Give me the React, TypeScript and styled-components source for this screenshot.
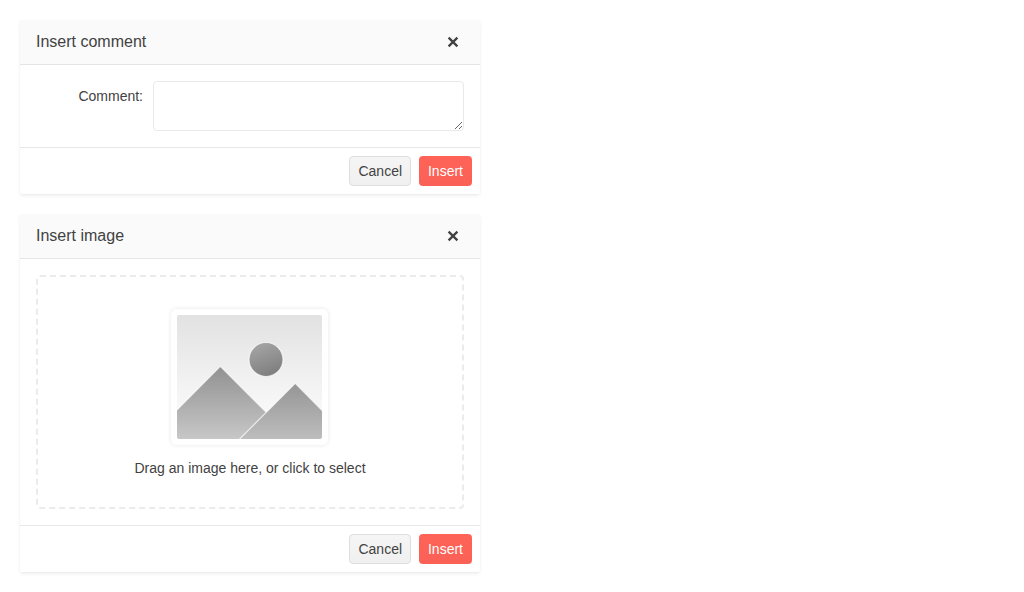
import React from "react";
import styled, { createGlobalStyle } from "styled-components";

const Global = createGlobalStyle`
  body {
    margin: 0;
    background: #fff;
    color: #424242;
    font: 14px/20px "Liberation Sans", Arial, sans-serif;
  }
  *, *::before, *::after { box-sizing: border-box; }
`;

const Page = styled.main`
  display: flex;
  flex-direction: column;
  gap: 20px;
  width: 500px;
  padding: 20px;
`;

const Window = styled.section`
  display: flex;
  flex-direction: column;
  background: #fff;
  border-radius: 2px;
  box-shadow: 0 1px 2px rgba(0, 0, 0, 0.03), 0 2px 4px rgba(0, 0, 0, 0.06);
`;

const TitleBar = styled.header`
  display: flex;
  align-items: center;
  justify-content: space-between;
  height: 45px;
  padding: 0 16px;
  background: #fafafa;
  border-bottom: 1px solid #e5e5e5;
`;

const Title = styled.h2`
  margin: 0;
  font-size: 16px;
  font-weight: 400;
  line-height: 20px;
`;

const CloseButton = styled.button`
  display: flex;
  align-items: center;
  justify-content: center;
  width: 22px;
  height: 22px;
  padding: 0;
  border: 0;
  background: transparent;
  color: #424242;
  svg { overflow: visible; }
`;

const Content = styled.div`
  padding: 16px;
`;

const Field = styled.label`
  display: flex;
  align-items: flex-start;
  gap: 10px;
`;

const FieldLabel = styled.span`
  width: 107px;
  padding-top: 5px;
  text-align: right;
`;

const TextArea = styled.textarea`
  display: block;
  width: 311px;
  height: 50px;
  margin: 0;
  padding: 4px 8px;
  border: 1px solid #e9e9e9;
  border-radius: 4px;
  background: #fff;
  color: inherit;
  font: inherit;
  resize: both;
`;

const DropZone = styled.div`
  display: flex;
  flex-direction: column;
  align-items: center;
  height: 234px;
  padding-top: 32px;
  border: 2px dashed #ebebeb;
  border-radius: 4px;
`;

const Frame = styled.div`
  width: 157px;
  height: 136px;
  margin-right: 1px;
  padding: 6px;
  background: #fff;
  border-radius: 5px;
  box-shadow: 0 0 4px rgba(0, 0, 0, 0.1);
  svg { display: block; }
`;

const Hint = styled.p`
  margin: 13px 0 0;
`;

const Actions = styled.footer`
  display: flex;
  justify-content: flex-end;
  gap: 8px;
  padding: 8px;
  border-top: 1px solid #e8e8e8;
`;

const Button = styled.button<{ $primary?: boolean }>`
  width: ${(p) => (p.$primary ? 53 : 62)}px;
  height: 30px;
  padding: 0 0 0 ${(p) => (p.$primary ? 0 : 0.5)}px;
  border: 1px solid ${(p) => (p.$primary ? "transparent" : "#dedede")};
  border-radius: 4px;
  background: ${(p) =>
    p.$primary
      ? "linear-gradient(#ff6358, #fa6156) border-box"
      : "linear-gradient(#f5f5f5, #f0f0f0)"};
  color: ${(p) => (p.$primary ? "#fff" : "#424242")};
  font: inherit;
`;

function Picture() {
  return (
    <svg width="145" height="124" viewBox="0 0 145 124">
      <defs>
        <linearGradient id="sky" x1="0" y1="0" x2="0" y2="1">
          <stop offset="0" stopColor="#e2e2e2" />
          <stop offset="1" stopColor="#fff" />
        </linearGradient>
        <linearGradient id="hill" x1="0" y1="0" x2="0" y2="1">
          <stop offset="0" stopColor="#919191" />
          <stop offset="1" stopColor="#c8c8c8" />
        </linearGradient>
        <linearGradient id="hillFront" x1="0" y1="0" x2="0" y2="1">
          <stop offset="0" stopColor="#959595" />
          <stop offset="1" stopColor="#bebebe" />
        </linearGradient>
        <linearGradient id="sun" x1="0.3" y1="0" x2="0.7" y2="1">
          <stop offset="0" stopColor="#a5a5a5" />
          <stop offset="1" stopColor="#7c7c7c" />
        </linearGradient>
        <clipPath id="photo">
          <rect width="145" height="124" rx="2" />
        </clipPath>
      </defs>
      <g clipPath="url(#photo)" stroke="#fff" strokeOpacity="0.7" strokeWidth="1.2">
        <rect width="145" height="124" fill="url(#sky)" stroke="none" />
        <circle cx="89" cy="44.5" r="17" fill="url(#sun)" />
        <path d="M-2 97 43.3 51.3 89 97.1 116 125H-2Z" fill="url(#hill)" />
        <path d="M61.5 125.2 118.2 68.3 147 97.3V125.2Z" fill="url(#hillFront)" />
      </g>
    </svg>
  );
}

function Dialog({ title, children }: { title: string; children: React.ReactNode }) {
  return (
    <Window>
      <TitleBar>
        <Title>{title}</Title>
        <CloseButton aria-label="Close">
          <svg width="10" height="10" viewBox="0 0 10 10" fill="none" stroke="currentColor" strokeWidth="2.3">
            <path d="M0.6 0.6 9.4 9.4M9.4 0.6 0.6 9.4" />
          </svg>
        </CloseButton>
      </TitleBar>
      <Content>{children}</Content>
      <Actions>
        <Button>Cancel</Button>
        <Button $primary>Insert</Button>
      </Actions>
    </Window>
  );
}

export default function App() {
  return (
    <>
      <Global />
      <Page>
        <Dialog title="Insert comment">
          <Field>
            <FieldLabel>Comment:</FieldLabel>
            <TextArea />
          </Field>
        </Dialog>
        <Dialog title="Insert image">
          <DropZone>
            <Frame>
              <Picture />
            </Frame>
            <Hint>Drag an image here, or click to select</Hint>
          </DropZone>
        </Dialog>
      </Page>
    </>
  );
}
